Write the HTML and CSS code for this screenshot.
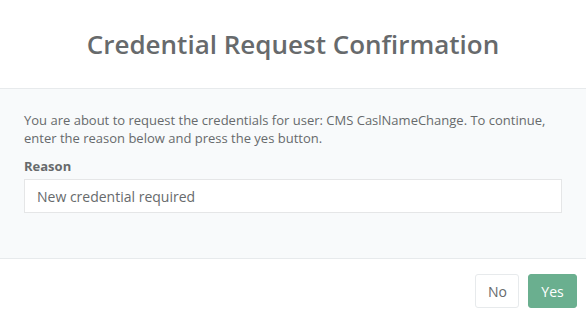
FILE: index.html
```html
<!DOCTYPE html>
<html>
<head>
<meta charset="utf-8">
<link rel="stylesheet" href="styles.css">
</head>
<body>
<div class="modal">
  <div class="modal-header">
    <h4 class="modal-title">Credential Request Confirmation</h4>
  </div>
  <div class="modal-body">
    <p class="intro">You are about to request the credentials for user: CMS CaslNameChange. To continue, enter the reason below and press the yes button.</p>
    <label class="label">Reason</label>
    <input class="input" type="text" value="New credential required">
  </div>
  <div class="modal-footer">
    <button class="btn btn-white">No</button>
    <button class="btn btn-primary">Yes</button>
  </div>
</div>
</body>
</html>
```
FILE: styles.css
```css
* { box-sizing: border-box; }
html, body { margin: 0; padding: 0; background: #fff; }
body { font-family: "Open Sans", "Liberation Sans", sans-serif; color: #676a6c; font-size: 13px; }
.modal { width: 586px; height: 319px; display: flex; flex-direction: column; }
.modal-header { height: 89px; border-bottom: 1px solid #e7eaec; display: flex; align-items: center; justify-content: center; }
.modal-title { margin: 0; font-size: 26px; font-weight: 600; line-height: 1.1; color: #676a6c; }
.modal-body { height: 170px; background: #f8fafb; border-bottom: 1px solid #e7eaec; padding: 22px 24px 0 24px; display: flex; flex-direction: column; }
.intro { margin: 0 0 10px 0; line-height: 18px; font-size: 13px; }
.label { font-weight: 700; font-size: 13px; line-height: 18px; margin-bottom: 4px; }
.input { width: 538px; height: 34px; border: 1px solid #e5e6e7; background: #fff; padding: 0 12px; font-family: inherit; font-size: 14px; color: #676a6c; outline: none; }
.modal-footer { flex: 1; display: flex; justify-content: flex-end; align-items: flex-start; padding: 15px 9px 0 0; gap: 9px; }
.btn { height: 34px; border-radius: 3px; font-family: inherit; font-size: 14px; padding: 0 12px; border: 1px solid #e7eaec; }
.btn-white { background: #fff; color: #676a6c; width: 44px; }
.btn-primary { background: #6aaf8f; border-color: #6aaf8f; color: #fff; width: 49px; }
```
